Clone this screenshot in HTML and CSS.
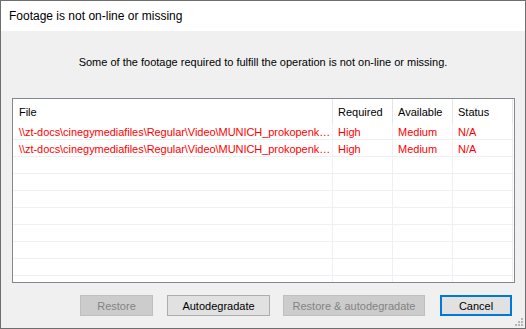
FILE: index.html
```html
<!DOCTYPE html>
<html>
<head>
<meta charset="utf-8">
<link rel="stylesheet" href="styles.css">
</head>
<body>
<div class="window">
  <div class="titlebar">Footage is not on-line or missing</div>
  <div class="content">
    <div class="message">Some of the footage required to fulfill the operation is not on-line or missing.</div>
    <div class="listbox">
      <div class="row header">
        <div class="cell c-file">File</div>
        <div class="cell c-col">Required</div>
        <div class="cell c-col">Available</div>
        <div class="cell c-col">Status</div>
      </div>
      <div class="row item">
        <div class="cell c-file">\\zt-docs\cinegymediafiles\Regular\Video\MUNICH_prokopenk…</div>
        <div class="cell c-col">High</div>
        <div class="cell c-col">Medium</div>
        <div class="cell c-col">N/A</div>
      </div>
      <div class="row item">
        <div class="cell c-file">\\zt-docs\cinegymediafiles\Regular\Video\MUNICH_prokopenk…</div>
        <div class="cell c-col">High</div>
        <div class="cell c-col">Medium</div>
        <div class="cell c-col">N/A</div>
      </div>
      <div class="row item"><div class="cell c-file"></div><div class="cell c-col"></div><div class="cell c-col"></div><div class="cell c-col"></div></div>
      <div class="row item"><div class="cell c-file"></div><div class="cell c-col"></div><div class="cell c-col"></div><div class="cell c-col"></div></div>
      <div class="row item"><div class="cell c-file"></div><div class="cell c-col"></div><div class="cell c-col"></div><div class="cell c-col"></div></div>
      <div class="row item"><div class="cell c-file"></div><div class="cell c-col"></div><div class="cell c-col"></div><div class="cell c-col"></div></div>
      <div class="row item"><div class="cell c-file"></div><div class="cell c-col"></div><div class="cell c-col"></div><div class="cell c-col"></div></div>
      <div class="row item"><div class="cell c-file"></div><div class="cell c-col"></div><div class="cell c-col"></div><div class="cell c-col"></div></div>
      <div class="row item"><div class="cell c-file"></div><div class="cell c-col"></div><div class="cell c-col"></div><div class="cell c-col"></div></div>
      <div class="row item"><div class="cell c-file"></div><div class="cell c-col"></div><div class="cell c-col"></div><div class="cell c-col"></div></div>
    </div>
    <div class="buttons">
      <button class="btn disabled b-restore">Restore</button>
      <button class="btn b-auto">Autodegradate</button>
      <button class="btn disabled b-both">Restore &amp; autodegradate</button>
      <button class="btn focused b-cancel">Cancel</button>
    </div>
    <svg class="grip" width="8" height="8" viewBox="0 0 8 8">
      <rect x="6" y="0" width="2" height="2" fill="#b5b5b5"/>
      <rect x="3" y="3" width="2" height="2" fill="#b5b5b5"/>
      <rect x="6" y="3" width="2" height="2" fill="#b5b5b5"/>
      <rect x="0" y="6" width="2" height="2" fill="#b5b5b5"/>
      <rect x="3" y="6" width="2" height="2" fill="#b5b5b5"/>
      <rect x="6" y="6" width="2" height="2" fill="#b5b5b5"/>
    </svg>
  </div>
</div>
</body>
</html>
```
FILE: styles.css
```css
* { box-sizing: border-box; }
html, body { margin: 0; padding: 0; }
body {
  font-family: "Liberation Sans", Arial, sans-serif;
  font-size: 11px;
  color: #000;
  background: #fff;
}
.window {
  width: 526px;
  height: 329px;
  border: 1px solid #6e6e6e;
  display: flex;
  flex-direction: column;
  background: #f0f0f0;
}
.titlebar {
  height: 30px;
  background: #fff;
  padding-left: 8px;
  line-height: 30px;
  font-size: 12px;
  color: #000;
}
.content {
  flex: 1;
  position: relative;
  display: flex;
  flex-direction: column;
  background: #f0f0f0;
}
.message {
  height: 67px;
  padding-top: 23px;
  text-align: center;
  font-size: 11px;
  line-height: 16px;
  color: #000;
}
.listbox {
  margin-left: 11px;
  width: 503px;
  height: 185px;
  border: 1px solid #828790;
  background: #fff;
  overflow: hidden;
}
.row { display: flex; }
.header { height: 24px; }
.header .cell {
  line-height: 26px;
  border-right: 1px solid #e5e5e5;
  color: #000;
}
.item { height: 17px; border-bottom: 1px solid #f0f0f0; }
.item .cell {
  line-height: 18px;
  border-right: 1px solid #f0f0f0;
  color: #ff0000;
}
.cell {
  padding-left: 6px;
  white-space: nowrap;
  overflow: hidden;
  text-overflow: ellipsis;
}
.c-file { width: 320px; padding-right: 0; letter-spacing: -0.05px; }
.c-col { width: 60px; padding-left: 5px; }
.buttons {
  display: flex;
  margin-top: 12px;
  height: 21px;
}
.btn {
  height: 21px;
  font-family: "Liberation Sans", Arial, sans-serif;
  font-size: 11px;
  padding: 0;
  border: 1px solid #adadad;
  background: #e1e1e1;
  color: #000;
  text-align: center;
}
.btn.disabled {
  background: #cccccc;
  border-color: #bfbfbf;
  color: #838383;
}
.btn.focused { border: 2px solid #0078d7; }
.b-restore { margin-left: 79px; width: 73px; }
.b-auto { margin-left: 14px; width: 103px; }
.b-both { margin-left: 13px; width: 142px; }
.b-cancel { margin-left: 15px; width: 72px; }
.grip {
  position: absolute;
  right: 2px;
  bottom: 2px;
}
```
